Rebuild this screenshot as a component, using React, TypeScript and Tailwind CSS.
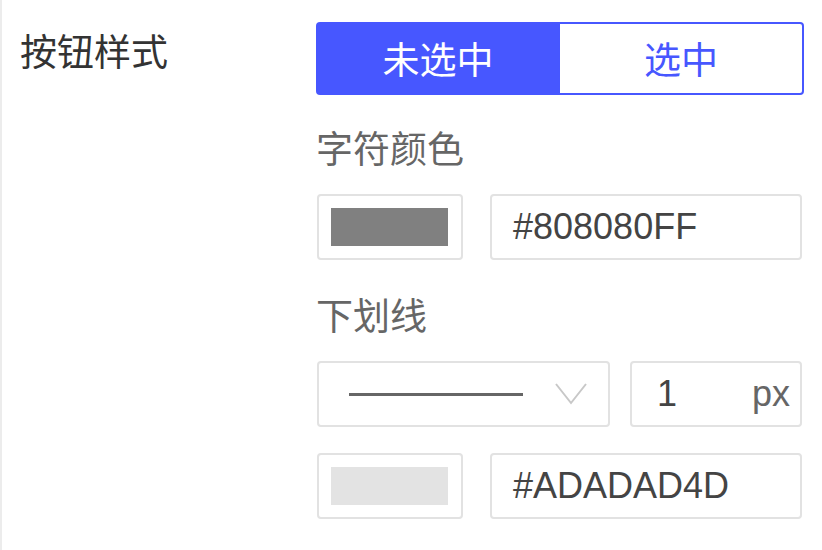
import type { ReactNode } from "react";

const cjk = "font-['Noto_Sans_CJK_SC',sans-serif]";
const latin = "font-['Liberation_Sans','Noto_Sans_CJK_SC',sans-serif]";

// color swatch + hex text field
function ColorRow({ swatch, hex }: { swatch: string; hex: string }) {
  return (
    <div className="flex h-[66px] gap-[27px]">
      <div className="flex w-[146px] items-center rounded-[4px] border-2 border-[#e2e2e2] pl-[12px]">
        <div className="h-[38px] w-[117px]" style={{ backgroundColor: swatch }} />
      </div>
      <div
        className={`flex w-[312px] items-center rounded-[4px] border-2 border-[#e2e2e2] pl-[21px] text-[36px] text-[#444] ${latin}`}
      >
        {hex}
      </div>
    </div>
  );
}

function Label({ children, className }: { children: ReactNode; className?: string }) {
  return (
    <div className={`text-[37px] leading-none text-[#666] ${cjk} ${className ?? ""}`}>
      {children}
    </div>
  );
}

export default function App() {
  return (
    <div className="flex h-[550px] w-[822px] border-l-2 border-[#ececec] bg-white">
      {/* row label */}
      <div className={`w-[314px] pt-[32px] pl-[18px] text-[37px] leading-none text-[#333] ${cjk}`}>
        按钮样式
      </div>

      <div className="flex w-[488px] flex-col pt-[22px]">
        {/* segmented toggle */}
        <div className={`flex h-[73px] text-[37px] ${cjk}`}>
          <button className="flex w-[244px] items-center justify-center rounded-l-[4px] bg-[#4757ff] text-white">
            未选中
          </button>
          <button className="flex flex-1 items-center justify-center rounded-r-[4px] border-2 border-l-0 border-[#4757ff] bg-white text-[#4757ff]">
            选中
          </button>
        </div>

        {/* text colour */}
        <Label className="mt-[34px]">字符颜色</Label>
        <div className="mt-[28px] pl-[1px]">
          <ColorRow swatch="#808080" hex="#808080FF" />
        </div>

        {/* underline */}
        <Label className="mt-[36px]">下划线</Label>
        <div className="mt-[28px] flex h-[66px] gap-[20px] pl-[1px]">
          <div className="flex w-[293px] items-center rounded-[4px] border-2 border-[#e2e2e2] pl-[30px]">
            <div className="h-[3px] w-[174px] bg-[#666]" />
            <svg
              width="32"
              height="22"
              viewBox="0 0 32 22"
              className="ml-[32px]"
              fill="none"
              stroke="#c8c8c8"
              strokeWidth="2"
            >
              <path d="M1 1 L16 20 L31 1" />
            </svg>
          </div>
          <div
            className={`flex w-[172px] items-center justify-between rounded-[4px] border-2 border-[#e2e2e2] pr-[10px] pl-[25px] text-[36px] ${latin}`}
          >
            <span className="text-[#444]">1</span>
            <span className="text-[#666]">px</span>
          </div>
        </div>

        <div className="mt-[26px] pl-[1px]">
          <ColorRow swatch="#e3e3e3" hex="#ADADAD4D" />
        </div>
      </div>
    </div>
  );
}
